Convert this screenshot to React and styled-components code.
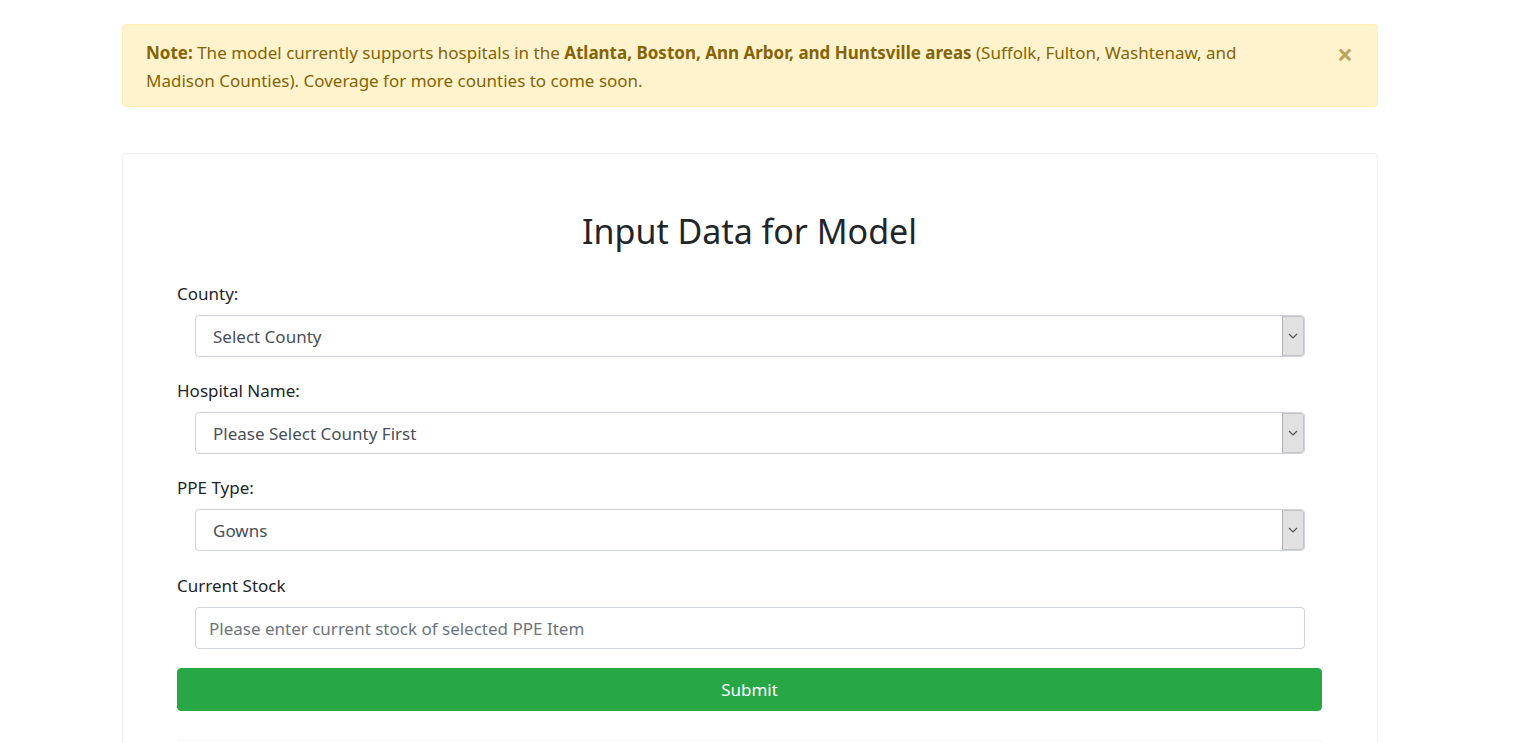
import React from "react";
import styled, { createGlobalStyle } from "styled-components";

const Global = createGlobalStyle`
  html, body { margin: 0; padding: 0; background: #fff; }
  body {
    font-family: "Noto Sans", "Open Sans", Arial, sans-serif;
    color: #212529;
    -webkit-font-smoothing: antialiased;
  }
  * { box-sizing: border-box; }
`;

const Page = styled.div`
  width: 1256px;
  margin: 0 0 0 122px;
  padding-top: 24px;
`;

const Alert = styled.div`
  position: relative;
  background: #fff3cd;
  border: 1px solid #ffeeba;
  border-radius: 4px;
  color: #856404;
  font-size: 17px;
  line-height: 28px;
  padding: 14px 80px 11px 23px;
`;

const Strong = styled.strong`
  font-weight: 700;
`;

const Close = styled.button`
  position: absolute;
  top: 14px;
  right: 24px;
  border: 0;
  background: transparent;
  padding: 0;
  color: #856404;
  opacity: 0.55;
  font-family: "Noto Sans", Arial, sans-serif;
  font-size: 28px;
  font-weight: 700;
  line-height: 30px;
  cursor: pointer;
`;

const Card = styled.div`
  margin-top: 46px;
  border: 1px solid #f3f3f3;
  border-radius: 4px;
  padding: 56px 55px 0 54px;
  height: 620px;
`;

const Title = styled.h2`
  margin: 0 0 27px;
  text-align: center;
  font-weight: 400;
  font-size: 34px;
  line-height: 43px;
  color: #212529;
`;

const Group = styled.div`
  margin-bottom: ${(p) => p.$mb || 20}px;
`;

const Label = styled.label`
  display: block;
  font-size: 17px;
  line-height: 27px;
  margin-bottom: 8px;
  color: #212529;
`;

const FieldWrap = styled.div`
  padding: 0 17px 0 18px;
`;

const SelectBox = styled.div`
  display: flex;
  align-items: stretch;
  height: 42px;
  border: 1px solid #ced4da;
  border-radius: 4px;
  background: #fff;
  overflow: hidden;
`;

const SelectText = styled.div`
  flex: 1;
  display: flex;
  align-items: center;
  padding-left: 17px;
  font-size: 17px;
  color: #495057;
`;

const Arrow = styled.div`
  width: 22px;
  display: flex;
  align-items: center;
  justify-content: center;
  background: #e1e1e1;
  border: 1px solid #c4c4c4;
  border-left-color: #adadad;
  border-radius: 0 4px 4px 0;
`;

const Input = styled.input`
  display: block;
  width: 100%;
  height: 42px;
  border: 1px solid #ced4da;
  border-radius: 4px;
  padding: 0 13px;
  font-family: inherit;
  font-size: 17px;
  color: #495057;
  &::placeholder { color: #6c757d; opacity: 1; }
`;

const Submit = styled.button`
  display: block;
  width: 100%;
  height: 43px;
  border: 1px solid #28a745;
  border-radius: 4px;
  background: #28a745;
  color: #fff;
  font-family: inherit;
  font-size: 17px;
`;

const Stripe = styled.div`
  margin-top: 28px;
  height: 8px;
  background: #fbfbfb;
`;

const Chevron = () => (
  <svg width="10" height="6" viewBox="0 0 10 6">
    <path d="M1 1 L5 5 L9 1" fill="none" stroke="#555" strokeWidth="1.2" />
  </svg>
);

const Select = ({ children }) => (
  <SelectBox>
    <SelectText>{children}</SelectText>
    <Arrow>
      <Chevron />
    </Arrow>
  </SelectBox>
);

export default function App() {
  return (
    <>
      <Global />
      <Page>
        <Alert>
          <Strong>Note:</Strong> The model currently supports hospitals in the{" "}
          <Strong>Atlanta, Boston, Ann Arbor, and Huntsville areas</Strong>{" "}
          (Suffolk, Fulton, Washtenaw, and Madison Counties). Coverage for more
          counties to come soon.
          <Close aria-label="Close">×</Close>
        </Alert>
        <Card>
          <Title>Input Data for Model</Title>
          <Group>
            <Label>County:</Label>
            <FieldWrap>
              <Select>Select County</Select>
            </FieldWrap>
          </Group>
          <Group>
            <Label>Hospital Name:</Label>
            <FieldWrap>
              <Select>Please Select County First</Select>
            </FieldWrap>
          </Group>
          <Group $mb={21}>
            <Label>PPE Type:</Label>
            <FieldWrap>
              <Select>Gowns</Select>
            </FieldWrap>
          </Group>
          <Group $mb={19}>
            <Label>Current Stock</Label>
            <FieldWrap>
              <Input placeholder="Please enter current stock of selected PPE Item" />
            </FieldWrap>
          </Group>
          <Submit>Submit</Submit>
          <Stripe />
        </Card>
      </Page>
    </>
  );
}
